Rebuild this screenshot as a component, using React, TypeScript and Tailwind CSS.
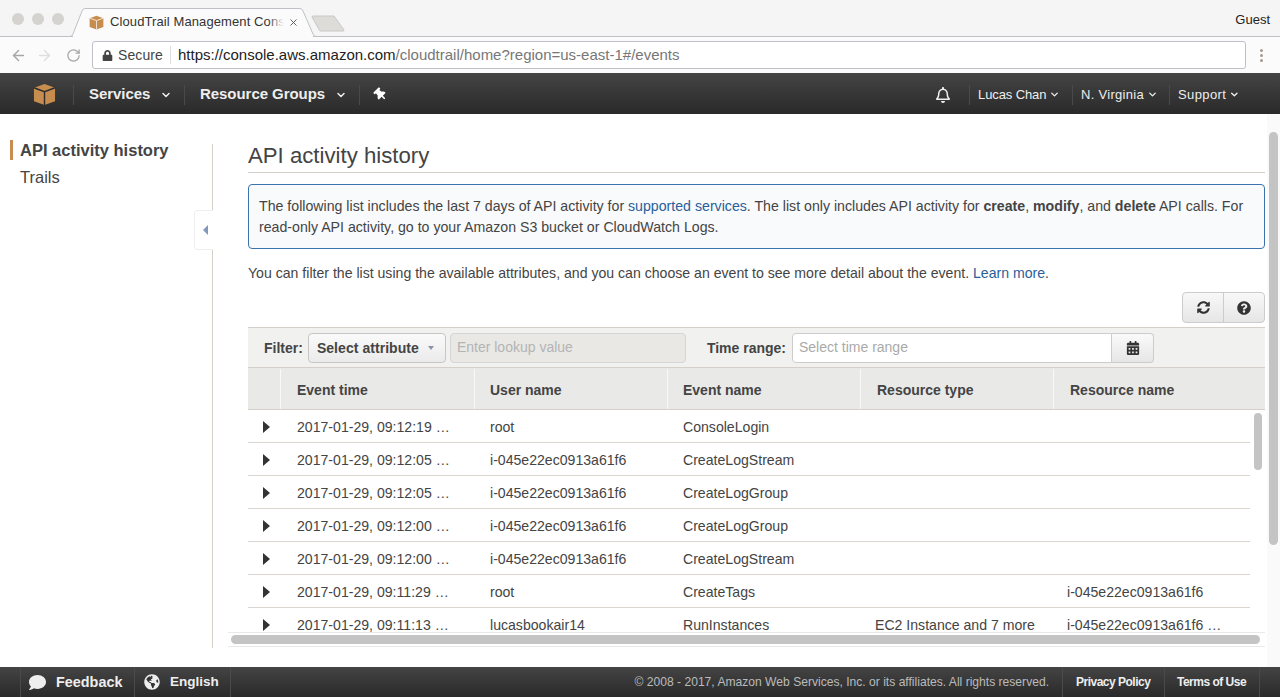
import { ArrowLeft, ArrowRight, ChevronDown, RotateCw, X } from "lucide-react";
import {
  FaCalendarAlt,
  FaComment,
  FaGlobeAmericas,
  FaLock,
  FaQuestionCircle,
  FaRegBell,
  FaSyncAlt,
  FaThumbtack,
} from "react-icons/fa";

const rows = [
  ["2017-01-29, 09:12:19 …", "root", "ConsoleLogin", "", ""],
  ["2017-01-29, 09:12:05 …", "i-045e22ec0913a61f6", "CreateLogStream", "", ""],
  ["2017-01-29, 09:12:05 …", "i-045e22ec0913a61f6", "CreateLogGroup", "", ""],
  ["2017-01-29, 09:12:00 …", "i-045e22ec0913a61f6", "CreateLogGroup", "", ""],
  ["2017-01-29, 09:12:00 …", "i-045e22ec0913a61f6", "CreateLogStream", "", ""],
  ["2017-01-29, 09:11:29 …", "root", "CreateTags", "", "i-045e22ec0913a61f6"],
  ["2017-01-29, 09:11:13 …", "lucasbookair14", "RunInstances", "EC2 Instance and 7 more", "i-045e22ec0913a61f6 …"],
];

const headers = [
  { label: "Event time", cls: "w-[194px] pl-[16px]" },
  { label: "User name", cls: "w-[193px] pl-[15px]" },
  { label: "Event name", cls: "w-[193px] pl-[15px]" },
  { label: "Resource type", cls: "w-[193px] pl-[16px]" },
  { label: "Resource name", cls: "w-[211px] border-r-0 pl-[16px]" },
];

const cellWidths = ["w-[193px]", "w-[193px]", "w-[192px]", "w-[192px]", "w-[193px]"];

function Cube({ size, line }: { size: number; line: string }) {
  return (
    <svg width={size} height={size} viewBox="0 0 24 24">
      <path d="M12 1 L23 5 V19 L12 23 L1 19 V5 Z" fill="#c68d4f" />
      <path d="M1 5 L12 9 L23 5 M12 9 V23" fill="none" stroke={line} strokeWidth="1.500" />
    </svg>
  );
}

function NavMenu({ label, cls }: { label: string; cls: string }) {
  return (
    <div className={`flex h-[20px] items-center border-l border-[#4a4a4a] pl-[8px] text-[13px] text-[#eeeeee] ${cls}`}>
      <span>{label}</span>
      <ChevronDown size={11} strokeWidth={3} className="ml-[3px]" />
    </div>
  );
}

export default function App() {
  return (
    <div className="flex h-[697px] w-[1280px] flex-col overflow-hidden bg-white font-['Liberation_Sans',Arial,sans-serif] text-[#444444]">
      {/* Browser tabs */}
      <div className="flex h-[37px] items-end border-b border-[#bfc1c7] bg-[#f5f5f5]">
        <div className="flex h-full items-center gap-[8px] pl-[12px] pt-[2px]">
          <div className="h-[12px] w-[12px] rounded-full bg-[#d5d3d0]" />
          <div className="h-[12px] w-[12px] rounded-full bg-[#d5d3d0]" />
          <div className="h-[12px] w-[12px] rounded-full bg-[#d5d3d0]" />
        </div>
        <div className="relative ml-[5px] flex h-[28px] w-[248px] items-center pl-[20px]">
          <svg className="absolute left-0 top-0" width="248" height="30" viewBox="0 0 248 30">
            <path d="M4 26 L13 3 Q14 0.500 16 0.500 H231 Q233 0.500 234 3 L244 26 V29 H4 Z" fill="#fbfbfb" />
            <path d="M0 28.500 H1 Q3 28.500 4 26 L13 3 Q14 0.500 16 0.500 H231 Q233 0.500 234 3 L244 26 Q245 28.500 247 28.500 H248" fill="none" stroke="#bfc1c7" />
          </svg>
          <div className="relative flex items-center gap-[6px]">
            <Cube size={15} line="#f5e6d5" />
            <div className="relative w-[174px] overflow-hidden whitespace-nowrap text-[13px] tracking-[0.1px] text-[#333333]">
              CloudTrail Management Cons
              <div className="absolute inset-y-0 right-0 w-[16px] bg-gradient-to-r from-transparent to-[#fbfbfb]" />
            </div>
            <X size={11} strokeWidth={2} className="-ml-[2px] text-[#555555]" />
          </div>
        </div>
        <svg className="mb-[4px] ml-[-6px]" width="34" height="17" viewBox="0 0 34 17">
          <path d="M1 2 Q1 1 2 1 H23 L33 15 Q33 16 32 16 H9 Z" fill="#dedcd8" stroke="#c8c8c8" />
        </svg>
        <div className="ml-auto self-start pr-[10px] pt-[12px] text-[13px] leading-[15px] text-[#222222]">Guest</div>
      </div>

      {/* Browser toolbar */}
      <div className="flex h-[36px] items-center bg-[#fbfbfb]">
        <div className="flex w-[92px] items-center pl-[10px]">
          <ArrowLeft size={17} className="text-[#a6a6a6]" />
          <ArrowRight size={17} className="ml-[9px] text-[#dedede]" />
          <RotateCw size={15} className="ml-[13px] text-[#a6a6a6]" />
        </div>
        <div className="flex h-[28px] w-[1154px] items-center rounded-[3px] border border-[#bfc1c7] bg-white">
          <FaLock size={11} className="ml-[9px] text-[#444444]" />
          <span className="ml-[5px] pr-[7px] text-[14px] tracking-[0.1px] text-[#444444]">Secure</span>
          <span className="h-[18px] border-l border-[#dddddd]" />
          <span className="ml-[7px] text-[15px] text-[#222222]">
            https://console.aws.amazon.com<span className="text-[#777777]">/cloudtrail/home?region=us-east-1#/events</span>
          </span>
        </div>
        <div className="ml-[14px] flex flex-col gap-[2px]">
          <div className="h-[3px] w-[3px] rounded-full bg-[#a59a8e]" />
          <div className="h-[3px] w-[3px] rounded-full bg-[#a59a8e]" />
          <div className="h-[3px] w-[3px] rounded-full bg-[#a59a8e]" />
        </div>
      </div>

      {/* AWS nav */}
      <div className="flex h-[41px] items-center bg-gradient-to-b from-[#444444] to-[#2a2a2a] pt-[2px] text-white">
        <div className="flex w-[73px] justify-center pl-[15px]">
          <Cube size={23} line="#2e2e2e" />
        </div>
        <div className="flex h-[20px] w-[111px] items-center gap-[10px] border-l border-[#4a4a4a] pl-[15px] text-[15px] font-bold tracking-[-0.05px] text-[#eeeeee]">
          Services
          <ChevronDown size={12} strokeWidth={3} />
        </div>
        <div className="flex h-[20px] w-[175px] items-center gap-[10px] border-l border-[#4a4a4a] pl-[15px] text-[15px] font-bold tracking-[-0.05px] text-[#eeeeee]">
          Resource Groups
          <ChevronDown size={12} strokeWidth={3} />
        </div>
        <div className="flex h-[20px] items-center border-l border-[#4a4a4a] pl-[14px]">
          <FaThumbtack size={13} className="-rotate-45" />
        </div>
        <div className="ml-auto flex items-center pr-[40px]">
          <FaRegBell size={16} className="mr-[18px] text-[#eeeeee]" />
          <NavMenu label="Lucas Chan" cls="w-[103px] tracking-[-0.1px]" />
          <NavMenu label="N. Virginia" cls="w-[97px] tracking-[0.3px]" />
          <NavMenu label="Support" cls="w-[71px] tracking-[0.4px]" />
        </div>
      </div>

      {/* Page body */}
      <div className="relative flex min-h-0 flex-1">
        <div className="mt-[30px] h-[504px] w-[213px] border-r border-[#d5cfc9]">
          <div className="-mt-[4px] ml-[10px] border-l-[3px] border-[#c68d4f] pl-[7px] text-[16.5px] font-bold leading-[20px] text-[#444444]">API activity history</div>
          <div className="ml-[20px] mt-[7px] text-[16.5px] leading-[20px]">Trails</div>
        </div>
        <div className="absolute left-[194px] top-[96px] flex h-[40px] w-[19px] items-center justify-center rounded-l-[4px] border border-r-0 border-[#eeeeee] bg-white pl-[2px]">
          <div className="h-0 w-0 border-y-[5px] border-r-[5px] border-y-transparent border-r-[#8398ba]" />
        </div>

        <div className="relative flex h-[534px] w-[1054px] flex-col overflow-hidden pl-[35px] pr-[2px]">
          <h1 className="mt-[28px] h-[31px] border-b border-[#d5cfc9] text-[22.2px] leading-[28px] text-[#444444]">API activity history</h1>
          <div className="mt-[11px] h-[65px] rounded-[4px] border border-[#3b73af] bg-[#f9fafc] px-[10px] pb-[10px] pt-[11px] text-[14.17px] leading-[21px]">
            The following list includes the last 7 days of API activity for <span className="text-[#2a5f99]">supported services</span>. The list only includes API activity for <b>create</b>, <b>modify</b>, and <b>delete</b> API calls. For read-only API activity, go to your Amazon S3 bucket or CloudWatch Logs.
          </div>
          <p className="mt-[14px] text-[14.1px] leading-[20px]">
            You can filter the list using the available attributes, and you can choose an event to see more detail about the event. <span className="text-[#2a5f99]">Learn more</span>.
          </p>
          <div className="mt-[9px] flex justify-end">
            <div className="flex h-[31px] w-[83px] rounded-[4px] border border-[#cccccc] bg-gradient-to-b from-[#f8f8f8] to-[#e6e6e6] text-[#333333]">
              <div className="flex flex-1 items-center justify-center border-r border-[#cccccc]">
                <FaSyncAlt size={13} />
              </div>
              <div className="flex flex-1 items-center justify-center">
                <FaQuestionCircle size={14} />
              </div>
            </div>
          </div>

          <div className="mt-[4px] flex h-[41px] items-center border-y border-[#d5cfc9] bg-[#f1f1f0] pl-[16px] text-[14px]">
            <b className="pt-[2px]">Filter:</b>
            <div className="ml-[5px] flex h-[30px] w-[138px] items-center justify-between rounded-[4px] border border-[#c6c6c6] bg-gradient-to-b from-[#fafafa] to-[#ebebeb] pl-[8px] pr-[11px] font-bold">
              <span className="pt-[2px] tracking-[0.05px]">Select attribute</span>
              <span className="h-0 w-0 border-x-[3px] border-t-[4px] border-x-transparent border-t-[#8a94a6]" />
            </div>
            <div className="ml-[4px] flex h-[30px] w-[236px] items-center rounded-[4px] border border-[#d5d5d5] bg-[#e9e8e5] pl-[6px] text-[#b4b4b4]">Enter lookup value</div>
            <b className="ml-[21px] pt-[2px]">Time range:</b>
            <div className="ml-[6px] flex h-[30px] w-[362px]">
              <div className="flex flex-1 items-center rounded-l-[4px] border border-[#cccccc] bg-white pl-[6px] text-[#aaaaaa]">Select time range</div>
              <div className="flex w-[42px] items-center justify-center rounded-r-[4px] border border-l-0 border-[#cccccc] bg-gradient-to-b from-[#fafafa] to-[#e6e6e6] text-[#333333]">
                <FaCalendarAlt size={14} />
              </div>
            </div>
          </div>

          <div className="flex h-[42px] shrink-0 items-stretch border-b border-[#d5cfc9] bg-[#e9e9e8] pt-[1px] text-[14px] font-bold">
            <div className="w-[33px] border-r border-[#f8f8f8]" />
            {headers.map((h) => (
              <div key={h.label} className={`flex items-center border-r border-[#f8f8f8] pt-[3px] ${h.cls}`}>
                {h.label}
              </div>
            ))}
          </div>

          <div className="min-h-0 flex-1 overflow-hidden pr-[15px] text-[14.1px] leading-[20px]">
            {rows.map((r, i) => (
              <div key={i} className="flex h-[33px] items-center border-b border-[#dbd5cf] pt-[2px]">
                <div className="-mt-[1px] flex w-[32px] justify-center pl-[4px]">
                  <div className="h-0 w-0 border-y-[6px] border-l-[7px] border-y-transparent border-l-[#333333]" />
                </div>
                {r.map((c, j) => (
                  <div key={j} className={`shrink-0 whitespace-nowrap pl-[17px] ${cellWidths[j]}`}>
                    {c}
                  </div>
                ))}
              </div>
            ))}
          </div>

          {/* table scrollbars */}
          <div className="absolute right-[5px] top-[299px] h-[57px] w-[8px] rounded-full bg-[#c4c4c4]" />
          <div className="absolute bottom-[1px] left-[15px] flex h-[15px] w-[1037px] items-center border-y border-[#e9e9e9] bg-white pl-[3px] pr-[5px]">
            <div className="h-[9px] w-full rounded-full bg-[#c4c4c4]" />
          </div>
        </div>

        <div className="flex w-[13px] justify-center bg-[#fafafa] pt-[18px]">
          <div className="h-[413px] w-[9px] rounded-full bg-[#c4c4c4]" />
        </div>
      </div>

      {/* Footer */}
      <div className="flex h-[30px] items-center bg-gradient-to-b from-[#444444] to-[#2a2a2a] text-[#eeeeee]">
        <div className="ml-[20px] flex h-full w-[114px] items-center gap-[10px] border-l border-[#4a4a4a] pl-[8px] text-[14.4px] font-bold">
          <FaComment size={17} />
          <span className="pt-[1px]">Feedback</span>
        </div>
        <div className="flex h-full w-[97px] items-center gap-[10px] border-x border-[#4a4a4a] pl-[9px] text-[13.5px] font-bold">
          <FaGlobeAmericas size={16} />
          English
        </div>
        <div className="ml-auto pr-[13px] text-[12.1px] text-[#bbbbbb]">© 2008 - 2017, Amazon Web Services, Inc. or its affiliates. All rights reserved.</div>
        <div className="flex h-full w-[102px] items-center border-l border-[#4a4a4a] pl-[13px] text-[12px] font-bold tracking-[-0.5px]">Privacy Policy</div>
        <div className="flex h-full w-[96px] items-center border-x border-[#4a4a4a] pl-[12px] text-[12px] font-bold tracking-[-0.5px]">Terms of Use</div>
        <div className="w-[20px]" />
      </div>
    </div>
  );
}
